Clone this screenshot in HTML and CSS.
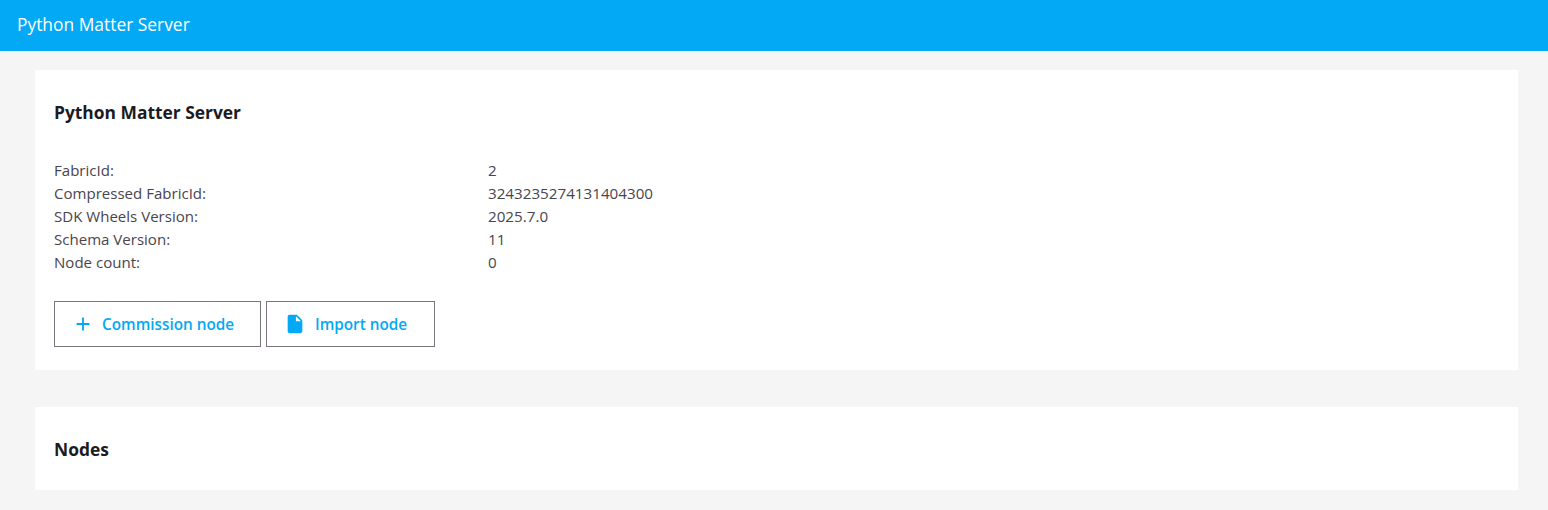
FILE: index.html
```html
<!DOCTYPE html>
<html lang="en">
<head>
<meta charset="utf-8">
<title>Python Matter Server</title>
<link rel="stylesheet" href="styles.css">
</head>
<body>
<header class="topbar">Python Matter Server</header>
<main class="content">
  <section class="card card-server">
    <h2 class="card-title">Python Matter Server</h2>
    <div class="info">
      <div class="info-row"><span class="info-label">FabricId:</span><span class="info-value">2</span></div>
      <div class="info-row"><span class="info-label">Compressed FabricId:</span><span class="info-value">3243235274131404300</span></div>
      <div class="info-row"><span class="info-label">SDK Wheels Version:</span><span class="info-value">2025.7.0</span></div>
      <div class="info-row"><span class="info-label">Schema Version:</span><span class="info-value">11</span></div>
      <div class="info-row"><span class="info-label">Node count:</span><span class="info-value">0</span></div>
    </div>
    <div class="actions">
      <button class="btn btn-commission" type="button">
        <svg class="btn-icon" viewBox="0 0 24 24"><path d="M19 13h-6v6h-2v-6H5v-2h6V5h2v6h6v2z"/></svg>
        Commission node
      </button>
      <button class="btn btn-import" type="button">
        <svg class="btn-icon" viewBox="0 0 24 24"><path d="M14 2H6c-1.1 0-2 .9-2 2v16c0 1.1.9 2 2 2h12c1.1 0 2-.9 2-2V8l-6-6zm-1 7V3.5L18.5 9H13z"/></svg>
        Import node
      </button>
    </div>
  </section>
  <section class="card card-nodes">
    <h2 class="card-title">Nodes</h2>
  </section>
</main>
</body>
</html>
```
FILE: styles.css
```css
* { box-sizing: border-box; }
html, body { margin: 0; padding: 0; }
body {
  background: #f5f5f5;
  font-family: "Open Sans", "Noto Sans", "Liberation Sans", sans-serif;
  color: #49454f;
  overflow: hidden;
}
.topbar {
  height: 51px;
  background: #03a9f4;
  color: #fff;
  font-size: 17.4px;
  line-height: 49px;
  padding-left: 17px;
}
.content {
  padding: 19px 30px 0 35px;
  display: flex;
  flex-direction: column;
  gap: 37px;
}
.card { background: #fff; padding: 0 19px; }
.card-server { height: 300px; padding-top: 30px; }
.card-nodes { height: 83px; padding-top: 30px; }
.card-title {
  margin: 0;
  font-size: 17.4px;
  line-height: 24px;
  font-weight: 700;
  color: #1c1b1f;
}
.info { margin-top: 35px; font-size: 15.05px; line-height: 23px; }
.info-row { display: grid; grid-template-columns: 434px 1fr; }
.info-value { font-size: 15.2px; }
.actions { display: flex; gap: 5px; margin-top: 27px; }
.btn {
  height: 46px;
  display: flex;
  align-items: center;
  background: #fff;
  border: 1px solid #79747e;
  color: #03a9f4;
  font-family: inherit;
  font-size: 15.3px;
  font-weight: 600;
  padding: 0;
}
.btn-commission { width: 207px; padding-left: 17px; }
.btn-import { width: 169px; padding-left: 17px; }
.btn-icon { width: 22px; height: 22px; fill: #03a9f4; flex: none; }
.btn-commission .btn-icon { margin-right: 8px; }
.btn-import .btn-icon { margin-right: 9px; }
```
